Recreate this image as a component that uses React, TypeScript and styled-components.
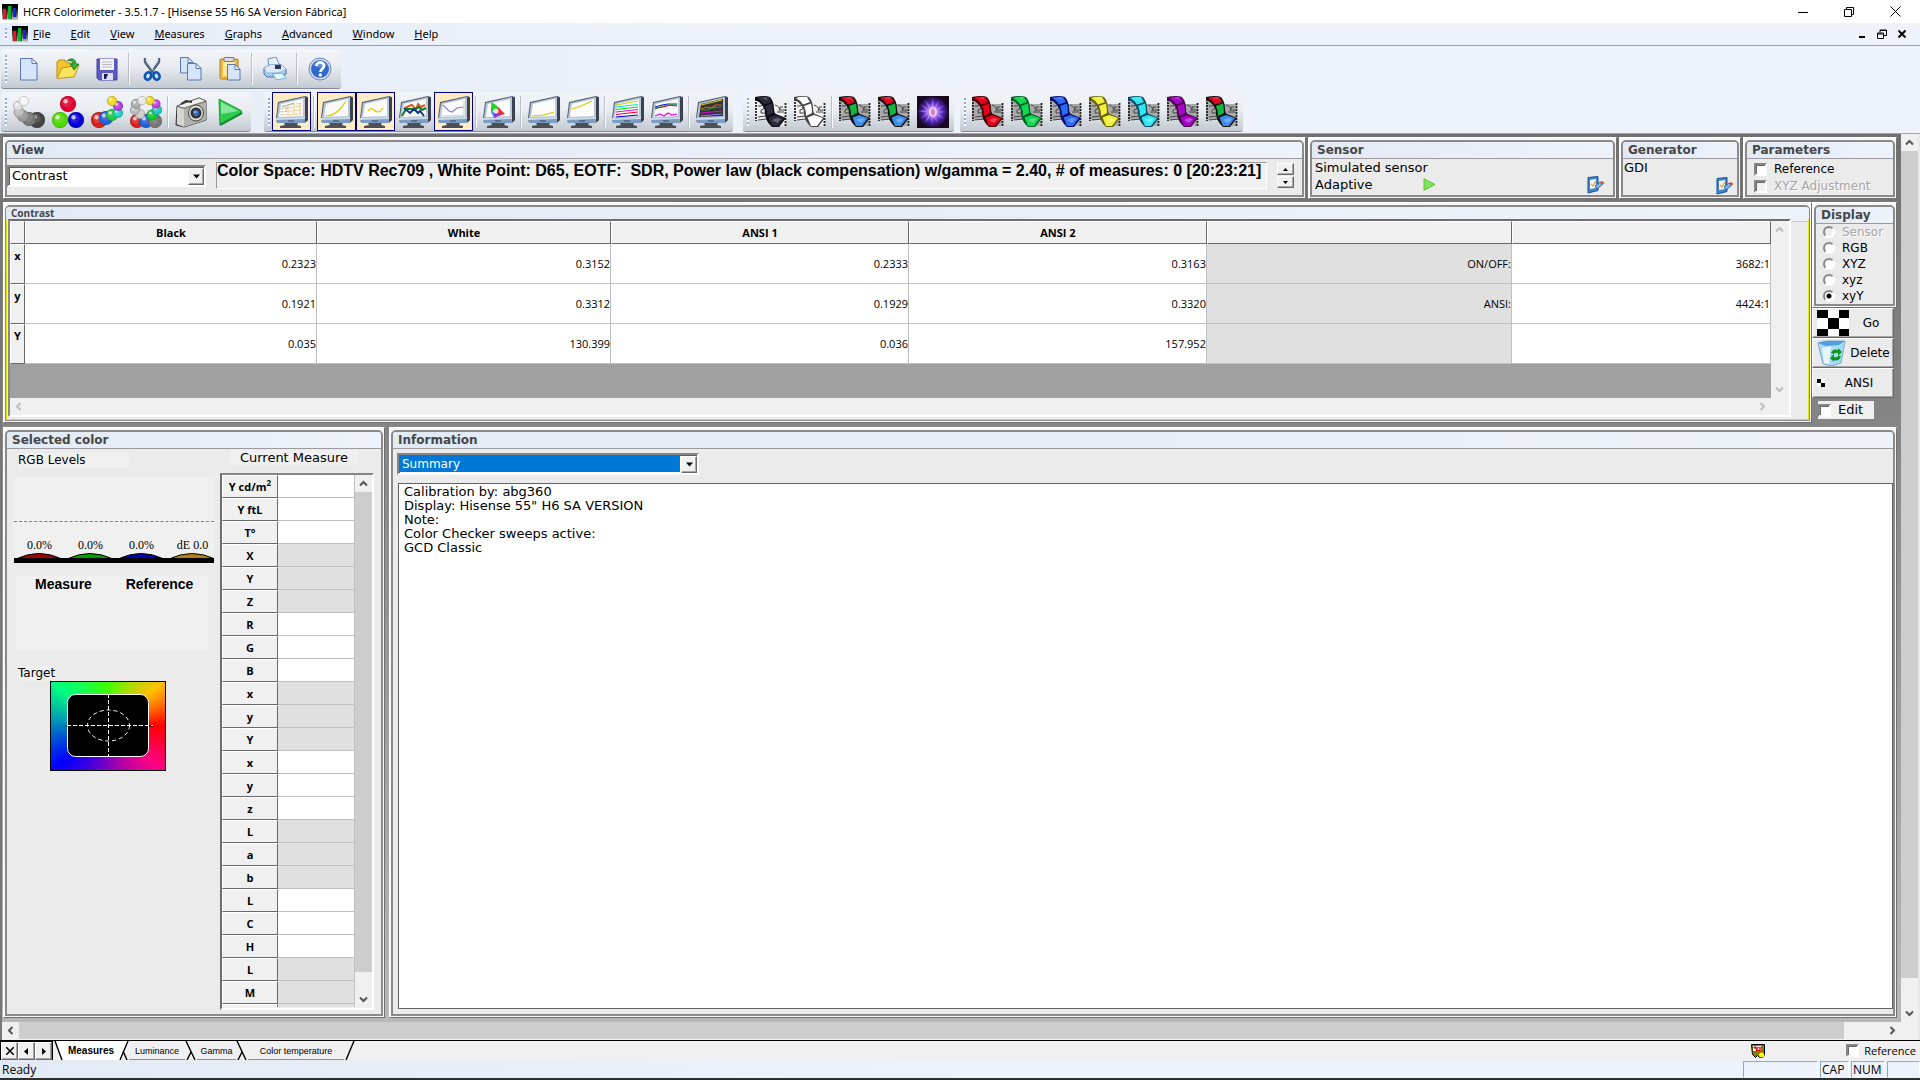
import React from "react";
import styled, { createGlobalStyle, css } from "styled-components";

const UI = '"Open Sans", "Noto Sans", sans-serif';
const MENU = '"Noto Sans", "Open Sans", sans-serif';
const WIDE = '"DejaVu Sans", Verdana, sans-serif';
const ARIAL = '"Liberation Sans", Arial, sans-serif';

const Global = createGlobalStyle`
  *, *::before, *::after { box-sizing: border-box; }
  html, body { margin: 0; padding: 0; }
  body { font: 12px/16px ${UI}; color: #000; background: #edf3fb; }
  button, input, select, textarea { font: inherit; color: inherit; margin: 0; padding: 0; border-radius: 0; }
  svg { display: block; }
`;

const Page = styled.div`
  display: flex;
  flex-direction: column;
  min-height: 100vh;
  border-bottom: 2px solid #2b2e2e;
`;

/* ---------- title and menu ---------- */
const TitleBar = styled.header`
  display: flex;
  align-items: center;
  height: 23px;
  padding: 0 2px;
  background: #fff;
  gap: 5px;
`;
const AppTitle = styled.h1`
  flex: 1;
  margin: 0;
  font: 400 11px/20px ${MENU};
`;
const WinButton = styled.button<{ $small?: boolean }>`
  display: flex;
  align-items: center;
  justify-content: center;
  width: ${(p) => (p.$small ? 20 : 46)}px;
  height: 20px;
  border: 0;
  background: none;
`;
const WinButtons = styled.div`
  display: flex;
`;
const MenuBar = styled.nav`
  display: flex;
  align-items: center;
  height: 23px;
  padding: 0 8px 0 5px;
  background: linear-gradient(90deg, #e5edf8, #eef3fb 40%);
  border-bottom: 1px solid #9a9da2;
  box-shadow: 0 1px 0 #fff;
`;
const MenuGrip = styled.span`
  width: 2px;
  height: 12px;
  margin-right: 5px;
  background: repeating-linear-gradient(#92adc8 0 2px, #f8fbff 2px 4px);
`;
const MenuItem = styled.button`
  border: 0;
  background: none;
  padding: 0 10px;
  font: 11px/18px ${MENU};
  &:first-of-type { padding-left: 5px; }
`;
const Fill = styled.div`
  flex: 1;
`;

/* ---------- tool bars ---------- */
const ToolArea = styled.div`
  display: flex;
  flex-direction: column;
  gap: 3px;
  padding: 3px 0 1px;
  background: linear-gradient(90deg, #e4ecf6, #eef3fb 45%);
  border-bottom: 1px solid #a3a6aa;
`;
const ToolRow = styled.div`
  display: flex;
  padding-left: 1px;
`;
const ToolGroup = styled.div<{ $after?: number }>`
  display: flex;
  align-items: center;
  height: 40px;
  padding-right: 2px;
  margin-right: ${(p) => p.$after ?? 0}px;
  border-radius: 3px;
  border-bottom: 1px solid #858b92;
  background: linear-gradient(#f1f4f9, #e9edf2 45%, #c2c9d0);
`;
const Grip = styled.span`
  width: 2px;
  height: 28px;
  margin: 0 2px 0 4px;
  background: repeating-linear-gradient(#92adc8 0 2px, #f8fbff 2px 4px);
`;
const Tool = styled.button<{ $on?: boolean }>`
  display: flex;
  align-items: center;
  justify-content: center;
  width: 39px;
  height: 39px;
  border: 1px solid ${(p) => (p.$on ? "#000080" : "transparent")};
  background: ${(p) => (p.$on ? "#ffecc4" : "none")};
`;
const Sep = styled.span`
  width: 2px;
  height: 32px;
  margin: 0 2px;
  background: linear-gradient(90deg, #b9bfc6 50%, #fafcff 50%);
`;

/* ---------- work area ---------- */
const Main = styled.main`
  flex: 1;
  display: grid;
  grid-template-columns: minmax(0, 1fr) 17px;
  grid-template-rows: minmax(0, 1fr) 18px;
  border-left: 2px solid #77777a;
  border-right: 2px solid #e8e8e8;
`;
const Work = styled.div`
  display: flex;
  flex-direction: column;
  gap: 3px;
  padding: 3px 4px 4px 1px;
  background: linear-gradient(#707070, #8a8a8a 40%, #b8b8b8);
`;
const TopRow = styled.div`
  display: grid;
  grid-template-columns: minmax(0, 1fr) 309px 122px 154px;
  gap: 2px;
  height: 62px;
`;
const MidRow = styled.div`
  display: grid;
  grid-template-columns: minmax(0, 1fr) 85px;
  height: 221px;
`;
const LowRow = styled.div`
  flex: 1;
  display: grid;
  grid-template-columns: 382px minmax(0, 1fr);
  gap: 4px;
  margin-top: 1px;
`;
const Outer = styled.section`
  display: flex;
  padding: 2px 1px 1px;
  background: #f7f7f7;
  border: 1px solid;
  border-color: #fff #707070 #707070 #fff;
  min-width: 0;
`;
const Inner = styled.div<{ $yellow?: boolean }>`
  flex: 1;
  min-width: 0;
  display: flex;
  flex-direction: column;
  border: 2px solid #8a8a8a;
  border-radius: 5px 5px 0 0;
  background: #ebebeb;
  ${(p) => p.$yellow && css`border-right-width: 1px; border-bottom-width: 1px; border-left-width: 1px; box-shadow: inset 0 0 0 1px #e6e600;`}
`;
const Heading = styled.h2<{ $tight?: boolean }>`
  margin: 0;
  padding: 0 0 0 5px;
  border-radius: 3px 3px 0 0;
  background: linear-gradient(90deg, #e2eaf5, #eef3fb);
  color: #464646;
  font: 700 12px/16px ${WIDE};
  border-bottom: 1px solid #9b9b9f;
  ${(p) => p.$tight && css`font: 700 10px/12px ${UI}; padding-left: 5px; border-bottom: 0;`}
`;
function Panel(p: { title: string; yellow?: boolean; children: React.ReactNode }) {
  return (
    <Outer>
      <Inner $yellow={p.yellow}>
        <Heading $tight={p.yellow}>{p.title}</Heading>
        {p.children}
      </Inner>
    </Outer>
  );
}
const Row = styled.div<{ $pad?: string; $gap?: number; $mid?: boolean }>`
  display: flex;
  flex: 1;
  min-height: 0;
  align-items: ${(p) => (p.$mid ? "center" : "stretch")};
  gap: ${(p) => p.$gap ?? 0}px;
  padding: ${(p) => p.$pad ?? "0"};
`;

/* ---------- classic controls ---------- */
const sunken = css`
  border: 2px solid;
  border-color: #858585 #fff #fff #858585;
`;
const raised = css`
  border: 1px solid;
  border-color: #fff #6a6a6a #6a6a6a #fff;
  box-shadow: inset -1px -1px 0 #a8a8a8;
  background: #f0f0f0;
`;
const Combo = styled.div<{ $w: number }>`
  position: relative;
  width: ${(p) => p.$w}px;
  height: 22px;
  background: #fff;
  ${sunken}
  box-shadow: inset 1px 1px 0 #5f5f5f;
`;
const Choice = styled.select<{ $blue?: boolean }>`
  appearance: none;
  width: 100%;
  height: 18px;
  padding-left: 2px;
  border: 1px solid transparent;
  border-right: 17px solid transparent;
  background: ${(p) => (p.$blue ? "#0078d7" : "#fff")};
  background-clip: padding-box;
  color: ${(p) => (p.$blue ? "#fff" : "#000")};
  font: ${(p) => (p.$blue ? 12 : 13)}px/16px ${WIDE};
`;
const Drop = styled.span`
  position: absolute;
  right: 0;
  top: 1px;
  width: 16px;
  height: 17px;
  display: flex;
  align-items: center;
  justify-content: center;
  pointer-events: none;
  ${raised}
`;
const Note = styled.output`
  flex: 1;
  min-width: 0;
  height: 27px;
  border: 1px solid;
  border-color: #9a9a9a #fff #fff #9a9a9a;
  background: #f0f0f0;
  font: 700 16px/16px ${ARIAL};
  white-space: pre;
  overflow: hidden;
`;
const Spin = styled.div`
  display: flex;
  flex-direction: column;
  gap: 1px;
`;
const SpinButton = styled.button`
  display: flex;
  align-items: center;
  justify-content: center;
  width: 17px;
  height: 12px;
  ${raised}
`;
const Check = styled.input`
  appearance: none;
  width: 13px;
  height: 13px;
  background: #fff;
  ${sunken}
  box-shadow: inset 1px 1px 0 #6a6a6a;
  &:disabled { background: #f0f0f0; }
`;
const Radio = styled.input`
  appearance: none;
  width: 12px;
  height: 12px;
  border-radius: 50%;
  background: #fff;
  border: 2px solid;
  border-color: #858585 #fff #fff #858585;
  &:disabled { background: #f0f0f0; }
  &:checked { background: radial-gradient(circle, #000 2px, #fff 3px); }
`;
const Field = styled.label<{ $off?: boolean; $gap?: number }>`
  display: flex;
  align-items: center;
  gap: ${(p) => p.$gap ?? 7}px;
  color: ${(p) => (p.$off ? "#a5a5a5" : "#000")};
  text-shadow: ${(p) => (p.$off ? "1px 1px 0 #fff" : "none")};
  font: 13px/16px ${WIDE};
`;
const Params = styled.div`
  display: flex;
  flex-direction: column;
  padding: 2px 0 0 7px;
  gap: 1px;
  ${Field} { font-size: 12px; }
`;
const Text = styled.span`
  font: 13px/17px ${WIDE};
  white-space: nowrap;
`;
const Plain = styled.button`
  display: flex;
  border: 0;
  background: none;
`;
const SensorBox = styled.div`
  flex: 1;
  display: grid;
  grid-template-columns: 108px 1fr auto;
  grid-template-rows: 17px 17px;
  align-items: center;
  padding: 0 8px 0 3px;
  ${Text}:first-child { grid-column: 1 / 4; }
`;
const GenBox = styled.div`
  flex: 1;
  display: flex;
  justify-content: space-between;
  padding: 0 3px 0 1px;
  ${Plain} { align-self: flex-end; }
`;

/* ---------- scroll bars ---------- */
const Bar = styled.div<{ $v?: boolean }>`
  display: flex;
  flex-direction: ${(p) => (p.$v ? "column" : "row")};
  ${(p) => (p.$v ? "width: 17px;" : "height: 17px;")}
  background: #f0f0f0;
`;
const Arrow = styled.button`
  display: flex;
  align-items: center;
  justify-content: center;
  flex: none;
  width: 17px;
  height: 17px;
  border: 0;
  background: none;
`;
const Thumb = styled.div<{ $size: string }>`
  flex: 0 0 ${(p) => p.$size};
  background: #cdcdcd;
`;
const turn = { up: 0, right: 90, down: 180, left: 270 };
function Chevron({ to, pale }: { to: keyof typeof turn; pale?: boolean }) {
  return (
    <svg width="9" height="9" viewBox="0 0 9 9" fill="none" stroke={pale ? "#bdbdbd" : "#555"} strokeWidth="2">
      <path d="M1 6.5 4.5 3 8 6.5" transform={`rotate(${turn[to]} 4.5 4.5)`} />
    </svg>
  );
}
function Scroll({ v, pale, size }: { v?: boolean; pale?: boolean; size?: string }) {
  return (
    <Bar $v={v}>
      <Arrow aria-label={v ? "Scroll up" : "Scroll left"}><Chevron to={v ? "up" : "left"} pale={pale} /></Arrow>
      {size && <Thumb $size={size} />}
      <Fill />
      <Arrow aria-label={v ? "Scroll down" : "Scroll right"}><Chevron to={v ? "down" : "right"} pale={pale} /></Arrow>
    </Bar>
  );
}

/* ---------- contrast grid ---------- */
const GridBox = styled.div`
  flex: 1;
  min-width: 0;
  display: grid;
  grid-template-columns: minmax(0, 1fr) 18px;
  grid-template-rows: minmax(0, 1fr) 17px;
  border: 2px solid;
  border-color: #6e6e6e #fff #fff #8a8a8a;
  background: #f0f0f0;
`;
const GridBack = styled.div`
  background: #a0a0a0;
`;
const Table = styled.table`
  width: 100%;
  table-layout: fixed;
  border-collapse: separate;
  border-spacing: 0;
  font: 11px/14px ${UI};
`;
const Col = styled.col<{ $w?: string }>`
  width: ${(p) => p.$w ?? "auto"};
`;
const Th = styled.th`
  height: 23px;
  padding: 0;
  border: 1px solid;
  border-color: #fff #696969 #696969 #fff;
  background: #f0f0f0;
  font-weight: 700;
`;
const RowTh = styled(Th)`
  height: 40px;
  padding-top: 4px;
  vertical-align: top;
`;
const Td = styled.td<{ $grey?: boolean }>`
  height: 40px;
  padding: 1px 0 0;
  text-align: right;
  background: ${(p) => (p.$grey ? "#e0e0e0" : "#fff")};
  border-right: 1px solid #c0c0c0;
  border-bottom: 1px solid #c0c0c0;
`;
const Strip = styled.div`
  width: 17px;
  height: 3px;
  background: #eef3fb;
  border-bottom: 1px solid #e6e600;
`;

/* ---------- side column ---------- */
const Side = styled.div`
  display: flex;
  flex-direction: column;
`;
const Radios = styled.div`
  display: flex;
  flex-direction: column;
  padding: 0 0 0 7px;
  height: 80px;
  ${Field} { height: 16px; font-size: 12px; }
`;
const SideButton = styled.button`
  display: grid;
  grid-template-columns: auto 1fr;
  align-items: center;
  width: 82px;
  height: 30px;
  padding-left: 4px;
  ${raised}
  background: #ebebeb;
  font: 12px/16px ${WIDE};
`;
const EditBox = styled.div`
  width: 56px;
  margin: 3px 0 0 6px;
  padding: 1px 0;
  background: #f0f0f0;
`;

/* ---------- selected colour ---------- */
const LeftCol = styled.div`
  width: 213px;
  display: flex;
  flex-direction: column;
  align-items: flex-start;
  padding: 4px 0 0 7px;
`;
const Tag = styled.span<{ $w?: number }>`
  width: ${(p) => (p.$w ? `${p.$w}px` : "auto")};
  margin-left: 4px;
  background: #f0f0f0;
  font: 12px/15px ${WIDE};
`;
const Levels = styled.div`
  display: flex;
  flex-direction: column;
  width: 200px;
  margin-top: 9px;
  background: #f0f0f0;
`;
const Dash = styled.div`
  height: 45px;
  border-bottom: 1px dashed #7d7d7d;
`;
const Values = styled.div`
  display: grid;
  grid-template-columns: repeat(4, 51px);
  margin-top: 16px;
  overflow: hidden;
  font: 12px/15px "Liberation Serif", "Times New Roman", serif;
  text-align: center;
`;
const Pair = styled.div`
  display: grid;
  grid-template-columns: 95px 1fr;
  width: 192px;
  height: 74px;
  margin: 13px 0 16px 2px;
  background: #f0f0f0;
  font: 700 14px/17px ${ARIAL};
  text-align: center;
`;
const TargetArt = styled.div`
  margin: 0 0 0 36px;
`;
const Wheel = styled.div`
  width: 116px;
  height: 90px;
  border: 1px solid #000;
  background: conic-gradient(from 0deg, #40ff00, #ffc000 52deg, #ff0000 90deg, #ff0080 128deg, #8000c0 180deg, #0000ff 232deg, #0080c0 270deg, #00ff80 308deg, #40ff00);
`;
const MeasureCol = styled.div`
  flex: 1;
  display: flex;
  flex-direction: column;
  padding: 1px 0 4px;
`;
const Centre = styled.div`
  width: 128px;
  margin: 0 0 8px 10px;
  text-align: center;
  background: #f0f0f0;
  font: 13px/15px ${WIDE};
`;
const MeasureBox = styled.div`
  flex: 1 1 0;
  min-height: 0;
  display: grid;
  grid-template-columns: 133px 17px;
  width: 154px;
  border: 2px solid;
  border-color: #858585 #fff #fff #6e6e6e;
  background: #f0f0f0;
`;
const Clip = styled.div`
  min-height: 0;
  height: 532px;
  overflow: hidden;
  table { font: 11px/14px ${UI}; }
  th, td { height: 23px; }
  sup { font-size: 8px; line-height: 0; }
`;

/* ---------- information ---------- */
const InfoBody = styled.div`
  flex: 1;
  display: flex;
  flex-direction: column;
  gap: 8px;
  padding: 4px 0 5px 4px;
`;
const Memo = styled.textarea`
  flex: 1;
  margin-left: 1px;
  padding: 1px 5px;
  border: 1px solid #636363;
  outline: 0;
  resize: none;
  background: #fff;
  font: 13px/14px ${WIDE};
`;

/* ---------- bottom ---------- */
const TabBar = styled.div`
  display: flex;
  align-items: stretch;
  height: 20px;
  border-top: 1px solid #000;
  background: #f0f0f0;
`;
const TabNav = styled.div`
  display: flex;
  padding: 1px 1px 0;
  background: #000;
`;
const NavButton = styled.button`
  width: 17px;
  display: flex;
  align-items: center;
  justify-content: center;
  ${raised}
`;
const Tab = styled.button<{ $on?: boolean; $w: number }>`
  width: ${(p) => p.$w}px;
  padding-top: 1px;
  border: 0;
  border-bottom: 1px solid ${(p) => (p.$on ? "#fff" : "#8d8d8d")};
  background: ${(p) => (p.$on ? "#fff" : "#f0f0f0")};
  font: ${(p) => (p.$on ? "700 10px" : "400 9px")}/16px ${ARIAL};
  white-space: nowrap;
`;
const TabRef = styled.div`
  display: flex;
  align-items: center;
  gap: 81px;
  padding: 0 4px 0 0;
  ${Field} { font: 11px/16px ${UI}; gap: 5px; }
`;
const Status = styled.footer`
  display: flex;
  height: 18px;
  gap: 2px;
  padding: 1px 0 0 2px;
  background: linear-gradient(90deg, #e2eaf5, #eef3fb 50%);
  font: 12px/17px ${UI};
`;
const Cell = styled.span<{ $w: number }>`
  width: ${(p) => p.$w}px;
  height: 17px;
  padding-left: 1px;
  border: 1px solid;
  border-color: #8fa9c8 #fff transparent #8fa9c8;
  line-height: 16px;
`;

/* ---------- drawings ---------- */
function Logo() {
  return (
    <svg width="16" height="16" viewBox="0 0 16 16">
      <defs><linearGradient id="lg" x1="0" y1="0" x2="0" y2="1"><stop offset=".2" stopColor="#000" /><stop offset="1" stopColor="#ccc" /></linearGradient></defs>
      <rect width="16" height="16" fill="url(#lg)" />
      <rect x="1" y="5" width="3.500" height="10" fill="#f01020" /><rect x="6" y="2" width="3.500" height="13" fill="#10b030" /><rect x="11" y="4" width="3" height="9" fill="#1030e0" />
      <path d="M4.500 5v10M9.500 2v13M14 4v9" stroke="#000" strokeOpacity=".5" />
    </svg>
  );
}
function Svg({ s = 24, children }: { s?: number; children: React.ReactNode }) {
  return <svg width={s} height={s} viewBox={`0 0 ${s} ${s}`}>{children}</svg>;
}
const Sheet = ({ x = 0, y = 0, w = 17, h = 22 }) => (
  <g transform={`translate(${x} ${y})`}>
    <path d={`M.5 .5H${w - 5}L${w} 5.500V${h}H.5z`} fill="#d6e5fc" stroke="#5a77b0" />
    <path d={`M${w - 5} .5V5.500H${w}z`} fill="#fff" stroke="#5a77b0" />
  </g>
);
const basic: React.ReactNode[] = [
  <Svg key="n"><Sheet x={3} y={1} /></Svg>,
  <Svg key="o"><path d="M1 21V5l2-2h6l2 3h8v4" fill="#f3c432" stroke="#b8860b" /><path d="M1 21.500 6 11l17-3-5 12z" fill="#ffe45e" stroke="#c39215" /><path d="M11 4c4-4 9-2 9 3h3l-5 6-4-6h3c0-3-2-4-6-3z" fill="#35b03b" stroke="#147a1e" strokeWidth=".8" /></Svg>,
  <Svg key="s"><path d="M2 2h20v21H4l-2-2z" fill="#5d5bc0" stroke="#4340a0" /><rect x="5" y="2" width="14" height="11" fill="#f4f4f8" /><path d="M7 5h10M7 7.500h10M7 10h10" stroke="#b9b9c8" /><rect x="7" y="16" width="11" height="7" fill="#dfe0ee" /><path d="M9 17h4l-2 5h-2z" fill="#1a1a60" /></Svg>,
  null,
  <Svg key="c"><path d="M5 1v4l8 11M19 1v4l-8 11" stroke="#54657e" strokeWidth="2.400" fill="none" /><path d="M6 2l7 11M18 2l-6 10" stroke="#dce5f0" /><ellipse cx="8" cy="19" rx="3" ry="3.800" fill="none" stroke="#0a54b4" strokeWidth="2.600" transform="rotate(20 8 19)" /><ellipse cx="16.500" cy="19" rx="3" ry="3.800" fill="none" stroke="#0a54b4" strokeWidth="2.600" transform="rotate(-20 16.500 19)" /></Svg>,
  <Svg key="p"><Sheet x={1} y={0} w={13} h={16} /><Sheet x={8} y={6} w={14} h={17} /></Svg>,
  <Svg key="t"><rect x="2" y="2" width="18" height="20" rx="1" fill="#eebc42" stroke="#ad7b20" /><rect x="5" y="5" width="12" height="14" fill="#ffe9a0" /><rect x="6" y="0.500" width="10" height="4" rx="1" fill="#d9dce4" stroke="#777" /><Sheet x={9} y={7} w={13} h={16} /></Svg>,
  null,
  <Svg key="r"><path d="M6 9 5 2l8-2 4 9z" fill="#e6f1ff" stroke="#6c8fc0" /><path d="M1 11l6-3h12l4 4v5l-6 3H4l-3-3z" fill="#a9c6ec" stroke="#48699b" /><path d="M1 11l6-3h12l4 4-7 3H4z" fill="#dce9fa" /><rect x="12" y="8" width="6" height="4" fill="#25395a" /><path d="M9 17l10-1 4 5-9 2z" fill="#e8f8ff" stroke="#68b0d8" /></Svg>,
  null,
  <Svg key="h"><circle cx="12" cy="12" r="11" fill="#d3dff3" stroke="#6f86b4" /><circle cx="12" cy="12" r="9" fill="#2f68ce" /><path d="M5 8a8 6 0 0 1 14 0q-7 5-14 0" fill="#82a9ec" opacity=".6" /><path d="M8.500 9c0-5 7.500-4.500 7.500 0 0 2.500-3.500 3-3.500 6" fill="none" stroke="#fff" strokeWidth="2.800" /><circle cx="12.300" cy="18" r="1.700" fill="#fff" /></Svg>,
];
function Balls({ list }: { list: [number, number, number, string][] }) {
  return (
    <Svg s={32}>
      {list.map(([x, y, r, c], i) => (
        <g key={i}>
          <circle cx={x} cy={y} r={r} fill={c} />
          <circle cx={x} cy={y} r={r - 0.3} fill="none" stroke="#000" strokeOpacity=".22" strokeWidth=".8" />
          <circle cx={x - r * 0.15} cy={y - r * 0.2} r={r * 0.6} fill="#fff" opacity=".12" />
          <circle cx={x - r * 0.3} cy={y - r * 0.35} r={r * 0.28} fill="#fff" opacity=".7" />
        </g>
      ))}
    </Svg>
  );
}
const sweeps: React.ReactNode[] = [
  <Balls key="a" list={[[24, 24, 8, "#444"], [16, 23, 7, "#777"], [10, 20, 6, "#999"], [6, 16, 5.5, "#bbb"], [5, 10, 5, "#ddd"], [11, 5, 5, "#f4f4f4"]]} />,
  <Balls key="b" list={[[16, 8, 8, "#e00030"], [8, 24, 8, "#50d800"], [24, 24, 8, "#0000d8"]]} />,
  <Balls key="c" list={[[8, 24, 8, "#d82020"], [15, 22, 7, "#2060e0"], [21, 19, 6, "#20c840"], [27, 17, 5, "#20d0c0"], [27, 10, 5, "#b040e0"], [21, 5, 5, "#f0d820"]]} />,
  <Balls key="d" list={[[7, 25, 7, "#d82020"], [16, 25, 7, "#2060e0"], [25, 25, 7, "#777"], [22, 19, 5.5, "#10c830"], [10, 18, 5, "#ccc"], [27, 14, 5, "#20c8c0"], [5, 14, 5, "#bbb"], [26, 8, 4.5, "#c040e0"], [6, 8, 5, "#aaa"], [20, 4.5, 4.5, "#f0d820"], [12, 4.5, 4.5, "#e8e8e8"]]} />,
  null,
  <Svg key="e" s={32}><path d="M2 10 24 2l7 3v19L9 31l-8-2z" fill="#8a8a86" stroke="#333" /><path d="M2 11l7 2v18l-7-3z" fill="#d5d5cf" /><path d="M9 13 31 6v18L9 31z" fill="#b2b2ad" /><path d="M2 10 24 2l7 3-22 7z" fill="#f0f0ea" stroke="#555" strokeWidth=".6" /><path d="M6 8l5-3 6 1" stroke="#333" strokeWidth="2" fill="none" /><ellipse cx="21" cy="17" rx="7.500" ry="8" fill="#e0e0da" stroke="#444" /><circle cx="21" cy="17" r="5.500" fill="#333" /><circle cx="21" cy="17" r="3" fill="#3674c8" /><circle cx="20" cy="16" r="1" fill="#cde" /></Svg>,
  <Svg key="f" s={32}><path d="M5 3 27 14.500 28 17 6 29z" fill="#2ecb50" stroke="#18953a" /><path d="M7 6 24 15 7 18z" fill="#87e69c" /><path d="M6 29 28 17" stroke="#128c34" strokeWidth="2" /></Svg>,
];
function Monitor({ dark, children }: { dark?: boolean; children?: React.ReactNode }) {
  return (
    <Svg s={32}>
      <path d="M8 27h14l-1 2 4 1v2H4v-2l5-1z" fill="#4a5056" />
      <path d="M2 6 29 0l3 1v23l-3 3H1L0 22z" fill="#54616f" />
      <path d="M3 7 29 1v21H1z" fill="#b9c8d8" />
      <path d="M5 8 27 3v17L3 21z" fill={dark ? "#333" : "#fbfbfb"} />
      <path d="M0 22 29 21v6H1z" fill="#7c9cc2" /><path d="M0 22 29 21v2L0 24z" fill="#cbdbec" />
      <path d="M12 25h6" stroke="#35496a" />
      <path d="M29 1l3 1v22l-3 2z" fill="#39424d" />
      <g fill="none" strokeWidth="1.200">{children}</g>
    </Svg>
  );
}
const P = ({ d, c }: { d: string; c: string }) => <path d={d} stroke={c} />;
type Item = { icon?: React.ReactNode; on?: boolean };
const views: Item[] = [
  { on: true, icon: <Monitor><P c="#f0d3a0" d="M6 10 26 7M6 13l20-3M5 16l21-2M5 19l21-1M12 9v10M18 8v10M24 7v11" /><P c="#b4b4b4" d="M6 11 18 7M5 12v1M5 15v1M5 18v1M9 12h3M9 15h2" /></Monitor> },
  {},
  { on: true, icon: <Monitor><P c="#d4cc00" d="M4 20c6 0 10-2 14-6q4-4 7-9" /></Monitor> },
  { on: true, icon: <Monitor><P c="#d4cc00" d="M8 15c2-3 4-3 6-1s5 4 9-2" /></Monitor> },
  { icon: <Monitor><g strokeWidth="2"><P c="#e05828" d="M6 12l4-2 3-1 4 5 2-6 3 3 4-2" /><P c="#108018" d="M3 20l4-7 5 0 4 0 4-2 3 3 4-2" /><P c="#103888" d="M5 12l6 5 4-4 4 4 2-2 4 5" /></g></Monitor> },
  { on: true, icon: <Monitor><P c="#8a82d0" d="M5 9l6 6 3 1 5-4 7-1" /><P c="#c8d8c8" d="M4 20l22-1V5" /></Monitor> },
  {},
  { icon: <Monitor><path d="M8 7v9l3 6z" fill="#2090ff" stroke="none" /><path d="M8 6l5 3 5 5-5 3-4-3z" fill="#20d820" stroke="none" /><path d="M15 11l7 7-7 2-2-4z" fill="#f03030" stroke="none" /><path d="M11 22l-1-6 8 3z" fill="#9030e0" stroke="none" /><circle cx="13" cy="15" r="2.500" fill="#fff" opacity=".8" /></Monitor> },
  {},
  { icon: <Monitor><P c="#d4cc00" d="M4 20c8 0 14-1 22-4" /></Monitor> },
  { icon: <Monitor><P c="#d4cc00" d="M5 13 14 10 25 5" /></Monitor> },
  {},
  { icon: <Monitor><P c="#d8d000" d="M4 9l22-4" /><P c="#00e8e8" d="M4 11l22-2.500" /><P c="#00e000" d="M4 13.500l22-2.500" /><P c="#f000f0" d="M4 16l22-2.500" /><P c="#f00020" d="M4 18.500l22-2.500" /><P c="#0000f0" d="M4 21l22-2" /></Monitor> },
  { icon: <Monitor><P c="#0020f0" d="M4 11l7-2 6-1 9 0" /><P c="#00b000" d="M4 13l8-3 6-1 8 0" /><P c="#f00020" d="M4 12l8-1 7-2 7 1" /><P c="#f000f0" d="M4 20l5-2 4 2 4-3 4 2 5-1" /></Monitor> },
  {},
  { icon: <Monitor dark><P c="#d8d000" d="M5 9l21-5" /><P c="#e06030" d="M5 13l6-2 4 1 5-3 6 0" /><P c="#20a020" d="M5 14l6 0 5-2 10-1" /><P c="#e000e0" d="M5 17l21-2" /><P c="#8080ff" d="M5 20l21-2" /></Monitor> },
];
function Film({ a, b = a, c = a, line = "#111", pale }: { a: string; b?: string; c?: string; line?: string; pale?: boolean }) {
  return (
    <Svg s={32}>
      <path d="M0 3h13v21H0zM17 8h14v22H17z" fill={pale ? "#f0f0f0" : "#aaa"} />
      <path d="M1 3v22M30.500 7v24" stroke="#222" strokeWidth="1.800" strokeDasharray="2 1" />
      <path d="M3 10h3q3-2 3 1t-3 3v3h4M28 11h-3v3h4M3 21l8-1M20 9q6 2 4 6M3 24l9-1M22 16h7" stroke="#444" fill="none" />
      <path d="M0 1Q10-1 15 1Q19 6 19 12 19 17 21 18L31 22 24 31 17 31Q11 26 10 18 10 12 7 9 4 5 0 4z" fill={line} />
      <path d="M2 2Q8 0 13 1L16 6 9 8.500Q6 4 2 2z" fill={a} />
      <path d="M10 10 17 7.500Q18 12 18 17L12 20Q12 14 10 10z" fill={b} />
      <path d="M13.500 21.500 20 19 29 22 23 30 17 30z" fill={c} /><path d="M17 24l5-2 4 1-4 4z" fill="#fff" opacity=".28" />
      <path d="M6 2l5-1 2 3z" fill="#fff" opacity=".2" />
    </Svg>
  );
}
const Nebula = () => (
  <Svg s={32}>
    <defs><radialGradient id="nb"><stop offset="0" stopColor="#fff" /><stop offset=".25" stopColor="#b070ff" /><stop offset=".65" stopColor="#4a20a8" /><stop offset="1" stopColor="#180820" /></radialGradient></defs>
    <rect width="32" height="32" fill="url(#nb)" />
    <path d="M16 2l1 10 5-8-3 9 9-4-8 6 10 1-10 1 7 6-9-4 3 8-5-7-1 10-1-10-6 7 4-9-9 5 7-6-9-2 9-1-7-6 9 5-4-9 6 7z" fill="#c8a8ff" opacity=".5" />
    <ellipse cx="16" cy="16" rx="4" ry="5" fill="#f4e6ff" opacity=".8" /><ellipse cx="16" cy="16" rx="2" ry="3.500" fill="#d880c0" />
  </Svg>
);
const RGB = <Film a="#e00820" b="#10b840" c="#3a8cf0" />;
const films: Item[] = [
  { icon: <Film a="#2c2c3c" line="#0c0c14" pale /> },
  { icon: <Film a="#fff" line="#444" pale /> },
  {},
  { icon: RGB },
  { icon: RGB },
  { icon: <Nebula /> },
];
const colours: Item[] = [
  { icon: <Film a="#e80018" line="#400008" /> },
  { icon: <Film a="#10d850" line="#045c28" /> },
  { icon: <Film a="#2a6cf4" line="#060668" /> },
  { icon: <Film a="#f4f038" line="#66620c" /> },
  { icon: <Film a="#30e8f0" line="#064c68" /> },
  { icon: <Film a="#a804c8" line="#44044c" /> },
  { icon: RGB },
];
const Config = () => (
  <Svg s={18}>
    <path d="M1 1.500 11 .5v14L1 17z" fill="#3f84cf" stroke="#174f92" /><path d="M3 4l6-1v9l-6 1z" fill="#f3f7fc" /><path d="M4 8l2 2 3-5" stroke="#e3b44a" fill="none" strokeWidth="1.500" /><path d="M8 10l5-4 3 2-6 5z" fill="#78b4ec" stroke="#174f92" strokeWidth=".8" /><path d="M13 6.500l2-1.500 2.500 2-2 1.500z" fill="#c85030" />
  </Svg>
);
const Play = () => <svg width="13" height="13" viewBox="0 0 13 13"><path d="M1 .8 12 6.500 1 12.200z" fill="#7ee458" stroke="#5bbf3a" /></svg>;
const Tri = ({ d }: { d: string }) => <svg width="7" height="7" viewBox="0 0 7 7"><path d={d} /></svg>;
const DOWN = "M0 1.500h7L3.500 5.500z";

const Slant = ({ kind }: { kind: "start" | "on" | "mid" | "end" }) => (
  <svg width="12" height="19" viewBox="0 0 12 19">
    {kind === "start" && <><path d="M2 0h10v19H9z" fill="#fff" /><path d="M2 0 9 19" stroke="#000" strokeWidth="1.400" /></>}
    {kind === "on" && <><path d="M0 0h12L4 19H0z" fill="#fff" /><path d="M11 0 3 19M6 10l4 9" stroke="#000" strokeWidth="1.400" /></>}
    {kind === "mid" && <path d="M1 0 10 19M6 11 2 19" stroke="#000" strokeWidth="1.400" />}
    {kind === "end" && <path d="M10 0 2 19" stroke="#000" strokeWidth="1.400" />}
  </svg>
);

function Tools({ label, items, after }: { label: string; items: Item[]; after?: number }) {
  return (
    <ToolGroup role="toolbar" aria-label={label} $after={after}>
      <Grip />
      {items.map((t, i) => (t.icon ? <Tool key={i} $on={t.on} aria-label={`${label} ${i + 1}`}>{t.icon}</Tool> : <Sep key={i} />))}
    </ToolGroup>
  );
}

const menus = ["File", "Edit", "View", "Measures", "Graphs", "Advanced", "Window", "Help"];
const heads = ["Black", "White", "ANSI 1", "ANSI 2", "", ""];
const data: [string, string[]][] = [
  ["x", ["0.2323", "0.3152", "0.2333", "0.3163", "ON/OFF:", "3682:1"]],
  ["y", ["0.1921", "0.3312", "0.1929", "0.3320", "ANSI:", "4424:1"]],
  ["Y", ["0.035", "130.399", "0.036", "157.952", "", ""]],
];
const widths = ["15px", "16.58%", "16.7%", "16.92%", "16.92%", "17.32%", undefined];
const measures: React.ReactNode[] = [<>Y cd/m<sup>2</sup></>, "Y ftL", "T°", "X", "Y", "Z", "R", "G", "B", "x", "y", "Y", "x", "y", "z", "L", "a", "b", "L", "C", "H", "L", "M", ""];
const greyRows = [3, 4, 5, 9, 10, 11, 15, 16, 17, 21, 22, 23];
const modes = ["Sensor", "RGB", "XYZ", "xyz", "xyY"];
const info = 'Calibration by: abg360\nDisplay: Hisense 55" H6 SA VERSION\nNote:\nColor Checker sweeps active:\nGCD Classic';

export default function App() {
  return (
    <>
      <Global />
      <Page>
        <TitleBar>
          <Logo />
          <AppTitle>HCFR Colorimeter - 3.5.1.7 - [Hisense 55 H6 SA Version Fábrica]</AppTitle>
          <WinButtons>
            <WinButton aria-label="Minimize"><svg width="10" height="10"><path d="M0 5.500h10" stroke="#000" /></svg></WinButton>
            <WinButton aria-label="Restore"><svg width="10" height="10" fill="none" stroke="#000"><path d="M.5 2.500h7v7h-7zM2.500 2.500v-2h7v7h-2" /></svg></WinButton>
            <WinButton aria-label="Close"><svg width="11" height="11" stroke="#000"><path d="M.5 .5l10 10M10.500 .5l-10 10" /></svg></WinButton>
          </WinButtons>
        </TitleBar>
        <MenuBar>
          <MenuGrip />
          <Logo />
          {menus.map((m) => <MenuItem key={m}><u>{m[0]}</u>{m.slice(1)}</MenuItem>)}
          <Fill />
          <WinButton $small aria-label="Minimize document"><svg width="8" height="10"><path d="M1 8h6" stroke="#000" strokeWidth="2" /></svg></WinButton>
          <WinButton $small aria-label="Restore document"><svg width="10" height="10" fill="none" stroke="#000"><path d="M.5 4h6v5.500h-6zM3 3.500V1h6.500v5.500h-3M.5 5h6M3 1.500h6.500" /></svg></WinButton>
          <WinButton $small aria-label="Close document"><svg width="8" height="8" stroke="#000" strokeWidth="2"><path d="M.5 .5l7 7M7.500 .5l-7 7" /></svg></WinButton>
        </MenuBar>
        <ToolArea>
          <ToolRow><Tools label="Standard" items={basic.map((icon) => ({ icon }))} /></ToolRow>
          <ToolRow>
            <Tools label="Measures" items={sweeps.map((icon) => ({ icon }))} after={13} />
            <Tools label="Views" items={views} after={10} />
            <Tools label="Sequences" items={films} after={6} />
            <Tools label="Saturations" items={colours} />
          </ToolRow>
        </ToolArea>
        <Main>
          <Work>
            <TopRow>
              <Panel title="View">
                <Row $mid $pad="3px 8px 6px 0" $gap={10}>
                  <Combo $w={199}>
                    <Choice aria-label="View"><option>Contrast</option></Choice>
                    <Drop><Tri d={DOWN} /></Drop>
                  </Combo>
                  <Note>{"Color Space: HDTV Rec709 , White Point: D65, EOTF:  SDR, Power law (black compensation) w/gamma = 2.40, # of measures: 0 [20:23:21]"}</Note>
                  <Spin>
                    <SpinButton aria-label="Up"><Tri d="M1 5h5L3.500 2z" /></SpinButton>
                    <SpinButton aria-label="Down"><Tri d="M1 2h5L3.500 5z" /></SpinButton>
                  </Spin>
                </Row>
              </Panel>
              <Panel title="Sensor">
                <SensorBox>
                  <Text>Simulated sensor</Text>
                  <Text>Adaptive</Text>
                  <Plain aria-label="Start"><Play /></Plain>
                  <Plain aria-label="Configure sensor"><Config /></Plain>
                </SensorBox>
              </Panel>
              <Panel title="Generator">
                <GenBox>
                  <Text>GDI</Text>
                  <Plain aria-label="Configure generator"><Config /></Plain>
                </GenBox>
              </Panel>
              <Panel title="Parameters">
                <Params>
                  <Field><Check type="checkbox" />Reference</Field>
                  <Field $off><Check type="checkbox" disabled />XYZ Adjustment</Field>
                </Params>
              </Panel>
            </TopRow>
            <MidRow>
              <Panel title="Contrast" yellow>
                <Row $pad="0 1px 3px 2px">
                  <GridBox>
                    <GridBack>
                      <Table>
                        <colgroup>{widths.map((w, i) => <Col key={i} $w={w} />)}</colgroup>
                        <thead><tr><Th />{heads.map((h, i) => <Th key={i} scope="col">{h}</Th>)}</tr></thead>
                        <tbody>
                          {data.map(([name, cells]) => (
                            <tr key={name}><RowTh scope="row">{name}</RowTh>{cells.map((c, i) => <Td key={i} $grey={i === 4}>{c}</Td>)}</tr>
                          ))}
                        </tbody>
                      </Table>
                    </GridBack>
                    <Scroll v pale />
                    <Scroll pale />
                  </GridBox>
                  <Strip />
                </Row>
              </Panel>
              <Side>
                <Panel title="Display">
                  <Radios>
                    {modes.map((m, i) => (
                      <Field key={m} $off={i === 0}><Radio type="radio" name="mode" disabled={i === 0} defaultChecked={i === 4} />{m}</Field>
                    ))}
                  </Radios>
                </Panel>
                <SideButton><svg width="32" height="26" viewBox="0 0 32 26"><path fill="#fff" d="M0 0h32v26H0z" /><path d="M0 0h11v8H0zM22 0h10v8H22zM11 8h11v11H11zM0 19h11v7H0zM22 19h10v7H22z" /></svg>Go</SideButton>
                <SideButton><svg width="30" height="26" viewBox="0 0 30 26"><path d="M1 3l8-2h19l-4 22-9 3-9-2z" fill="#a9d8f8" stroke="#78a8c8" /><path d="M1 3l8-2h19l-6 4-13 1z" fill="#4f9fdf" /><path d="M5 8l9-2-2 18-5-1z" fill="#e8f6ff" /><path d="M14 13q2-5 7-3V8l4 4-4 4v-3q-3-1-4 1zM24 16q-2 6-7 4v2l-4-4 4-4v3q3 1 4-1z" fill="#0a9a18" /></svg>Delete</SideButton>
                <SideButton><svg width="8" height="8" viewBox="0 0 8 8"><path fill="#fff" d="M0 0h8v8H0z" /><path d="M0 0h4v4H0zM4 4h4v4H4z" /></svg>ANSI</SideButton>
                <EditBox><Field><Check type="checkbox" />Edit</Field></EditBox>
              </Side>
            </MidRow>
            <LowRow>
              <Panel title="Selected color">
                <Row>
                  <LeftCol>
                    <Tag $w={111}>RGB Levels</Tag>
                    <Levels>
                      <Dash />
                      <Values><span>0.0%</span><span>0.0%</span><span>0.0%</span><span>dE 0.0</span></Values>
                      <svg width="200" height="10" viewBox="0 0 200 10">
                        {["#a80000", "#00a000", "#0000b0", "#b88010"].map((c, i) => <path key={c} d={`M${2 + i * 51} 6Q${25 + i * 51}-5 ${48 + i * 51} 6z`} fill={c} stroke="#000" />)}
                        <path d="M0 5h200v5H0z" />
                      </svg>
                    </Levels>
                    <Pair><span>Measure</span><span>Reference</span></Pair>
                    <Tag>Target</Tag>
                    <TargetArt>
                      <Wheel>
                        <svg width="114" height="88" viewBox="0 0 114 88" fill="none" stroke="#fff">
                          <path d="M14.500 44h88" stroke="#000" />
                          <rect x="16.500" y="12.500" width="81" height="62" rx="8" fill="#000" />
                          <ellipse cx="57.500" cy="43.500" rx="21" ry="15.500" strokeDasharray="4 3" />
                          <path d="M16 43.500h86M57.500 12v63" strokeDasharray="4 2" />
                        </svg>
                      </Wheel>
                    </TargetArt>
                  </LeftCol>
                  <MeasureCol>
                    <Centre>Current Measure</Centre>
                    <MeasureBox>
                      <Clip>
                        <Table>
                          <colgroup><Col $w="56px" /><Col /></colgroup>
                          <tbody>
                            {measures.map((m, i) => <tr key={i}><Th scope="row">{m}</Th><Td $grey={greyRows.includes(i)} /></tr>)}
                          </tbody>
                        </Table>
                      </Clip>
                      <Scroll v size="480px" />
                    </MeasureBox>
                  </MeasureCol>
                </Row>
              </Panel>
              <Panel title="Information">
                <InfoBody>
                  <Combo $w={302}>
                    <Choice $blue aria-label="Information"><option>Summary</option></Choice>
                    <Drop><Tri d={DOWN} /></Drop>
                  </Combo>
                  <Memo aria-label="Calibration notes" defaultValue={info} />
                </InfoBody>
              </Panel>
            </LowRow>
          </Work>
          <Scroll v size="calc(100% - 61px)" />
          <Scroll size="calc(100% - 74px)" />
          <Bar />
        </Main>
        <TabBar>
          <TabNav>
            <NavButton aria-label="Close tab"><svg width="8" height="8" stroke="#000" strokeWidth="1.500"><path d="M0 0l8 8M8 0 0 8" /></svg></NavButton>
            <NavButton aria-label="Previous tab"><Tri d="M5 0v7L1 3.500z" /></NavButton>
            <NavButton aria-label="Next tab"><Tri d="M2 0v7l4-3.500z" /></NavButton>
          </TabNav>
          <Slant kind="start" />
          <Tab $on $w={52}>Measures</Tab>
          <Slant kind="on" />
          <Tab $w={56}>Luminance</Tab>
          <Slant kind="mid" />
          <Tab $w={39}>Gamma</Tab>
          <Slant kind="mid" />
          <Tab $w={96}>Color temperature</Tab>
          <Slant kind="end" />
          <Fill />
          <TabRef>
            <svg width="14" height="14" viewBox="0 0 14 14"><path d="M.5 .5h13v10l-2 3h-3l-2-2-2 2-3-3z" fill="#808000" stroke="#000" /><rect x="2" y="2" width="8" height="5" fill="#fff" /><path d="M2.500 4l2-1 1 2 2-2M5 6.500h4V3" stroke="#f01010" strokeWidth="1.500" fill="none" /><circle cx="10.500" cy="11" r="2.500" fill="#ff0" /></svg>
            <Field><Check type="checkbox" />Reference</Field>
          </TabRef>
        </TabBar>
        <Status>
          <span>Ready</span>
          <Fill />
          <Cell $w={75} /><Cell $w={29}>CAP</Cell><Cell $w={34}>NUM</Cell><Cell $w={33} />
        </Status>
      </Page>
    </>
  );
}
